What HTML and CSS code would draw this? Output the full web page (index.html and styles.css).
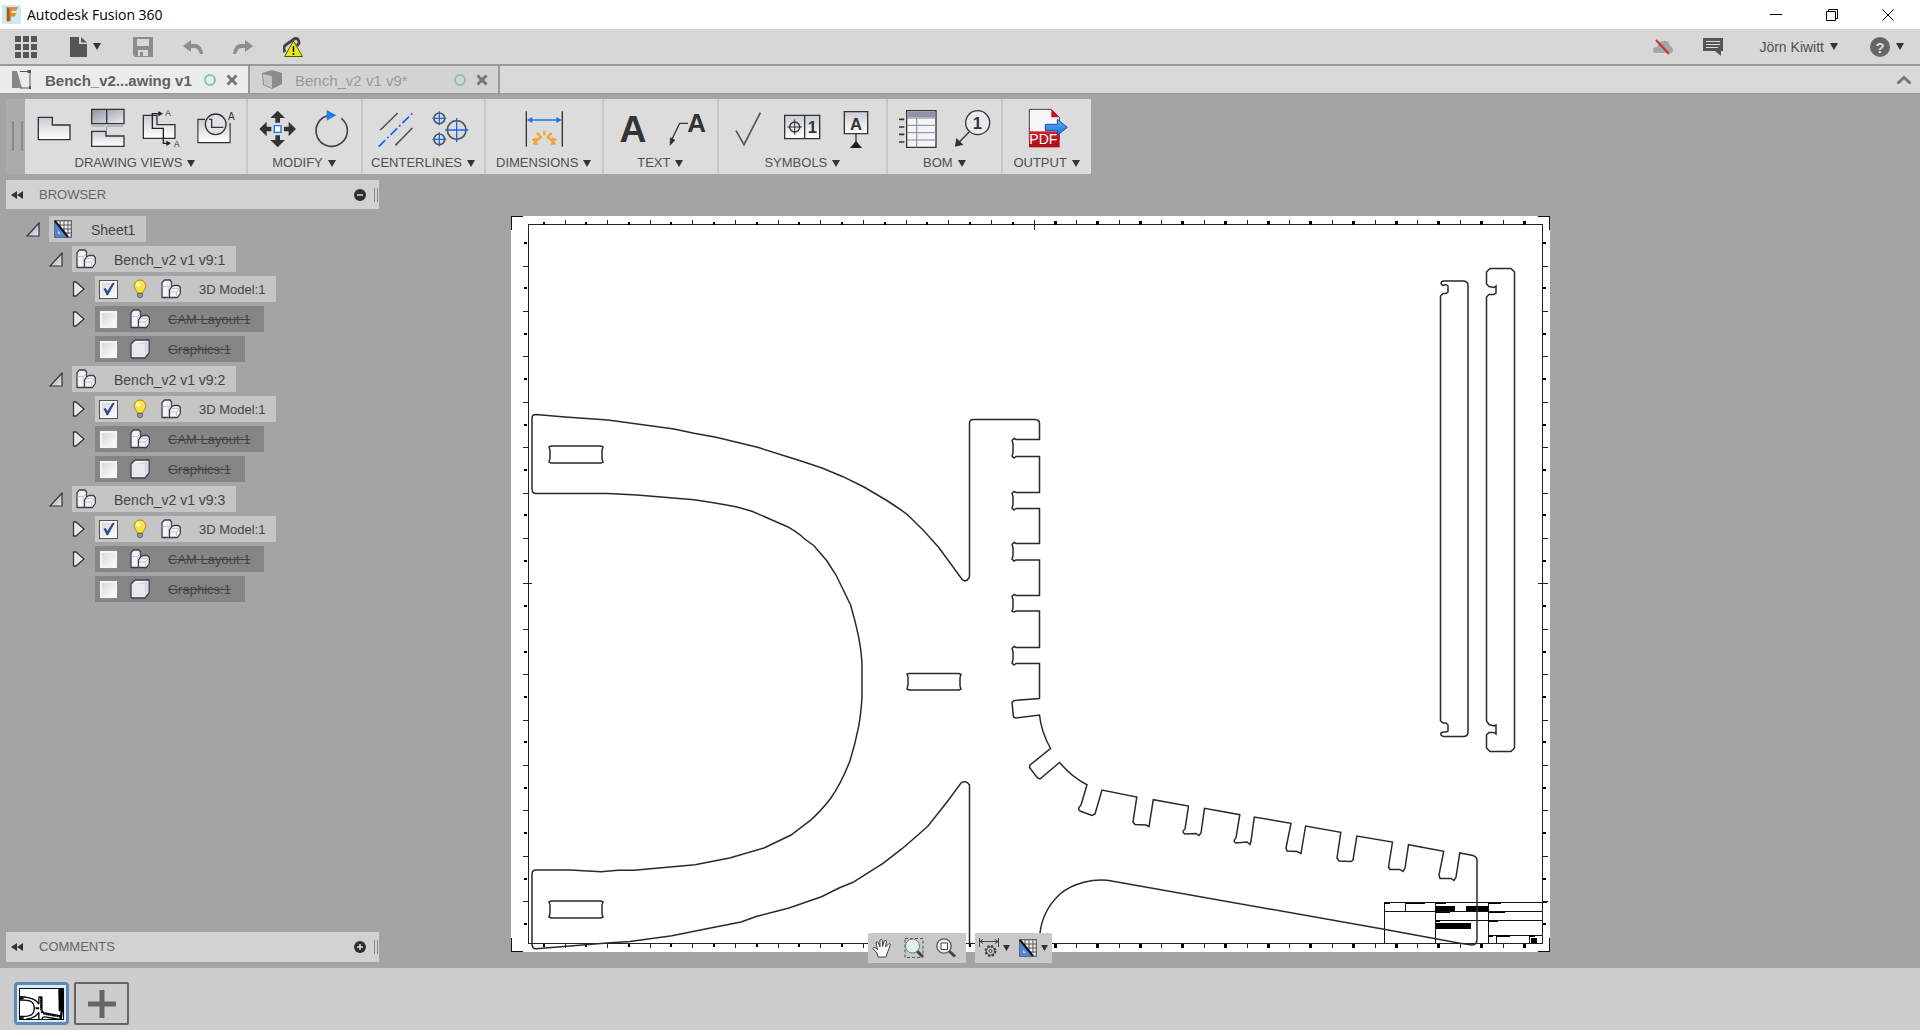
FILE: index.html
```html
<!DOCTYPE html>
<html lang="en">
<head>
<meta charset="utf-8">
<title>Autodesk Fusion 360</title>
<meta name="viewport" content="width=device-width, initial-scale=1">
<link rel="stylesheet" href="styles.css">
</head>
<body>
<svg class="defs" aria-hidden="true">
  <defs>
    <linearGradient id="metal" x1="0" y1="0" x2="0" y2="1"><stop offset="0" stop-color="#c9ccd6"/><stop offset="1" stop-color="#ffffff"/></linearGradient>
    <linearGradient id="metalDark" x1="0" y1="0" x2="1" y2="1"><stop offset="0" stop-color="#8f94a3"/><stop offset="1" stop-color="#eceef3"/></linearGradient>
    <linearGradient id="blueArrow" x1="0" y1="0" x2="0" y2="1"><stop offset="0" stop-color="#5cb2ff"/><stop offset="1" stop-color="#1a6fe0"/></linearGradient>
    <linearGradient id="redBox" x1="0" y1="0" x2="0" y2="1"><stop offset="0" stop-color="#d3202a"/><stop offset="1" stop-color="#a80d14"/></linearGradient>
    <symbol id="caret" viewBox="0 0 8 7"><path d="M0 0H8L4 7z" fill="#333"/></symbol>
    <symbol id="tri-open" viewBox="0 0 14 15"><path d="M13 1V14H1z" fill="url(#metalDark)" stroke="#333" stroke-width="1.2"/></symbol>
    <symbol id="tri-closed" viewBox="0 0 14 16"><path d="M1.500 1H4L12 8L4 15H1.500z" fill="#e8e8e8" stroke="#3a3a3a" stroke-width="1.300"/></symbol>
    <symbol id="bodies" viewBox="0 0 20 20"><path d="M1 3.500L3.500 1H9L10.500 3V8L13 6.500H17.500L19.300 8.500V14.500L16.500 18.500H1z" fill="#f2f3f6" stroke="#3c3f48" stroke-width="1.300" stroke-linejoin="round"/><path d="M1.700 7.500H7.500L10.300 5M7.800 7.500V18M8 12.500L11 9.500H18M8.500 13H15.500V18M15.500 13L18.500 9.500" fill="none" stroke="#c3c6ce" stroke-width="1"/><path d="M10.500 8L8.500 11V18" fill="none" stroke="#3c3f48" stroke-width="1.200"/></symbol>
    <symbol id="cube" viewBox="0 0 20 20"><path d="M1 5L5 1H19V14L15 19H2L1 18z" fill="#f1f2f5" stroke="#3c3f48" stroke-width="1.300" stroke-linejoin="round"/><path d="M2 5.500H14.500V18L18.300 13.500V2z" fill="#d9dbe2"/><path d="M2 6H14V18H2z" fill="#e9eaf0"/></symbol>
    <symbol id="bulb" viewBox="0 0 14 20"><path d="M7 1a6 6 0 0 0-3.500 10.800L4.500 14h5l1-2.200A6 6 0 0 0 7 1z" fill="#f8e23c" stroke="#b08a28" stroke-width="1"/><circle cx="5.500" cy="5.500" r="2.200" fill="#fffbd0"/><path d="M4.500 14.500h5v2.500l-1 1.500h-3l-1-1.500z" fill="#999" stroke="#555" stroke-width=".8"/></symbol>
    <symbol id="sheet-icon" viewBox="0 0 18 18"><rect x=".7" y=".7" width="16.600" height="16.600" fill="#f2f4f2" stroke="#555b66" stroke-width="1.200"/><path d="M6 1V14M10 1V14M14 1V14M4 5H17M4 9H17M4 13H17" stroke="#555" stroke-width="1"/><path d="M1 1V17H14z" fill="#4f86d8"/><path d="M1 1L14 17" stroke="#111" stroke-width="2"/><path d="M4 11v3h3z" fill="#bcd3f5"/></symbol>
    <symbol id="rewind" viewBox="0 0 12 8"><path d="M6 0V8L0 4zM12 0V8L6 4z" fill="#333"/></symbol>
    <symbol id="cross" viewBox="0 0 12 12"><path d="M1.500 1.500L10.500 10.500M10.500 1.500L1.500 10.500" stroke="#777" stroke-width="3"/></symbol>
    <g id="parts">
      <path d="M532 418Q532 414.500 536 414.500L565 417L608 420L630 423L674 429L694 433.300L716 437.300L757.500 447.300L787.500 456.700L801 461L822 468L843 476.700L864 487L886 500Q900 509 907 514.300Q924 530 938.600 547.300L962 579.300Q965.500 583 969 578L969.500 576V423Q970 419.500 973 419.500H1035Q1039.500 420 1039.500 423V439.500H1016l-2-1-2 2 1 3V453l-1 3 2 2 2-1.500H1039.500V492.500H1016l-2-1-2 2 1 3V505l-1 3 2 2 2-1.500H1039.500V543.500H1016l-2-1-2 2 1 3V556l-1 3 2 2 2-1H1039.500V595.500H1016l-2-1-2 2 1 3V608l-1 3 2 1 2-1H1039.500V647.500H1016l-2-1-2 2 1 3V660l-1 3 2 2 2-1.500H1039.500V698.500L1014 700.500L1012 702.500L1013.500 717L1015.500 718L1039.500 715Q1041 731 1050.500 748.500L1030 765L1029.500 767.500L1037.500 778L1040 779L1059.500 762.500Q1073 778 1087 784.700L1081 805Q1077 809 1080 811L1092 815.500L1095 814L1102 790L1136.800 797L1133 822L1135 824.500L1146 825L1149 826.500L1153.300 799.700L1188.500 806L1185 829Q1181 832 1185 834L1196 833.500L1199 835.500L1201 833L1204.500 808.300L1239.800 814.700L1236 838Q1232 841 1236 843L1247 842L1250 844.500L1251 841L1254.300 817L1291 823.300L1286 848L1287 851L1297 851.500L1301 853.500L1305.600 826L1340.800 832.300L1337 858L1339 861L1351 861.500L1353 860L1356.900 836L1392.500 842L1388.500 867L1390 869.500L1400 869.500L1403 871.500L1405 868L1408.500 844.700L1443.700 851.300L1439 875L1440 878.500L1451 878.500L1454 880.500L1456 877L1459.800 853L1473 855.500Q1477 857 1477 860V939Q1477 945 1472 945L1460 943.300L1384 929.300L1113 881.300C1094 877 1072 884 1060 894C1046 907 1039 922 1039.500 943.500"/>
      <path d="M532 418V489Q532 493.500 536 493.500H608L637 495L694 499.700Q723 504 737 507L752 511.300L787.500 526.700Q800 534 804 538.500L814 545.700L827 561L836 575L850.600 605Q855 620 858.600 636.700Q862 655 862 667.300V697.300Q861 714 858.600 726.700Q855 745 850 760.700Q841 784 830 799.300Q820 812 810 820.700L791 835L764 848L729.600 858L695 864.700L634 870.300H618L601 871.700L570 870H536Q532 870 532 874V945Q533 949 536 948.700L570 946L607 943L630 941.500L672 935.700L706.700 928.700L741 922L757 916.300L789 908L821.500 896.700L839 888L853 882.300L883 863.300L902 848.700Q917 836 928 826L947 802L961 783Q966 779.500 969.500 785V945"/>
      <path d="M551 446H601l2 1-1 3V459l1 3-2 1H551l-2-1 1-4V450l-1-3zM551 901H601l2 1-1 3V914l1 3-2 1H551l-2-1 1-4V905l-1-3zM909 673.500H959l2 1-1 3V686l1 3-2 1H909l-2-1 1-4V677l-1-3z"/>
      <path d="M1443 281H1464Q1468 282 1468 285V733Q1467 736.500 1464 736.500H1444Q1440 736 1441 733L1443 732H1446L1448 731V725L1446 723H1443L1440.500 721V296L1443 293.500H1446L1448 292V286L1446 284.500L1443 285.500Q1439 283 1443 281zM1490 268.500H1511L1514.500 272V748L1511 751.500H1490L1486.500 748V735L1489 732.500H1494L1496 734V725L1494 726L1489 724.500L1486.500 721V297L1489 294.500H1494L1496 293V286L1494 287.500L1489 286.500L1486.500 284V272z"/>
    </g>
  </defs>
</svg>

<div class="app">
  <header class="titlebar">
    <svg class="logo" viewBox="0 0 20 20"><rect width="20" height="20" fill="#cdeaf7"/><path d="M5 2H17L15 6H10V8.500H15L13.500 12H10L9 17H5z" fill="#e08a35"/><path d="M5 2L8 4V17H5z" fill="#a85c1c"/></svg>
    <h1>Autodesk Fusion 360</h1>
    <div class="window-controls">
      <button type="button" aria-label="Minimize"><svg viewBox="0 0 12 12"><path d="M0 5.500H12" stroke="#000"/></svg></button>
      <button type="button" aria-label="Restore"><svg viewBox="0 0 12 12"><path d="M.5 2.500H9.500V11.500H.5zM2.500 2.500V.5H11.500V9.500H9.500" fill="none" stroke="#000"/></svg></button>
      <button type="button" aria-label="Close"><svg viewBox="0 0 12 12"><path d="M.5 .5L11.500 11.500M11.500 .5L.5 11.500" stroke="#000"/></svg></button>
    </div>
  </header>

  <div class="quickbar">
    <div class="quick-left">
      <button type="button" aria-label="Data panel"><svg width="22" height="22" viewBox="0 0 22 22" fill="#555"><path d="M0 0h6v6H0zM8 0h6v6H8zM16 0h6v6h-6zM0 8h6v6H0zM8 8h6v6H8zM16 8h6v6h-6zM0 16h6v6H0zM8 16h6v6H8zM16 16h6v6h-6z"/></svg></button>
      <button type="button" aria-label="File" class="with-caret"><svg width="17" height="20" viewBox="0 0 17 20" fill="#555"><path d="M0 0H9V7H17V20H0z"/><path d="M11 0L17 5.500H11z"/></svg><svg class="caret"><use href="#caret"/></svg></button>
      <button type="button" aria-label="Save"><svg width="20" height="20" viewBox="0 0 20 20"><path d="M0 0H20V20H2L0 18z" fill="#8d8d8d"/><path d="M4 2H16V9H4z" fill="#d8d8d8"/><path d="M5 13H15V19H5z" fill="#d8d8d8"/><path d="M7 15h3v4H7z" fill="#8d8d8d"/></svg></button>
      <button type="button" aria-label="Undo"><svg width="20" height="14" viewBox="0 0 20 14"><path d="M0 6L8 0V4H13Q19 5 20 14H17Q15 8 12 8H8V12z" fill="#8d8d8d"/></svg></button>
      <button type="button" aria-label="Redo"><svg width="20" height="14" viewBox="0 0 20 14"><path d="M20 6L12 0V4H7Q1 5 0 14H3Q5 8 8 8H12V12z" fill="#8d8d8d"/></svg></button>
      <button type="button" aria-label="Update warning"><svg width="20" height="20" viewBox="0 0 20 20"><path d="M2 15Q-1 10 4 7L12 1.500Q16 1 16 6L14 9" fill="none" stroke="#444" stroke-width="3"/><path d="M10.500 4L19.500 19.500H1.500z" fill="#e9ec14" stroke="#555500"/><path d="M10.500 9V15M10.500 16V18" stroke="#111" stroke-width="1.500"/></svg></button>
    </div>
    <div class="quick-right">
      <button type="button" aria-label="Offline"><svg width="20" height="16" viewBox="0 0 20 16"><path d="M3 14Q0 14 0 11T4 8Q5 3 10 2Q16 1 17 7Q20 8 20 11T17 14z" fill="#a5a5a5"/><path d="M3 1L16 15" stroke="#c8303c" stroke-width="2"/></svg></button>
      <button type="button" aria-label="Comments"><svg width="20" height="18" viewBox="0 0 20 18"><path d="M0 0H20V13H18V18L12 13H0z" fill="#555"/><path d="M3 3.500H17M3 6.500H17M3 9.500H15" stroke="#ddd" stroke-width="1.200"/></svg></button>
      <button type="button" class="user with-caret">Jörn Kiwitt <svg class="caret"><use href="#caret"/></svg></button>
      <button type="button" aria-label="Help" class="with-caret"><svg width="20" height="20" viewBox="0 0 20 20"><circle cx="10" cy="10" r="10" fill="#666"/><text x="10" y="15.500" class="glyph-q">?</text></svg><svg class="caret"><use href="#caret"/></svg></button>
    </div>
  </div>

  <nav class="tabs" aria-label="Documents">
    <div class="tab active">
      <svg width="20" height="20" viewBox="0 0 20 20"><path d="M0 1H5L10 18H0z" fill="#888"/><path d="M8 1.500H18V18M16 0V3M8 18H19" fill="none" stroke="#555" stroke-width="1"/><path d="M16 0h3v3h-3zM17 16h2v3h-2z" fill="#555"/></svg>
      <a href="#drawing">Bench_v2...awing v1</a><i class="state"></i>
      <button type="button" aria-label="Close tab"><svg width="12" height="12"><use href="#cross"/></svg></button>
    </div>
    <div class="tab">
      <svg width="20" height="20" viewBox="0 0 20 20"><path d="M0 3L10 0L20 3V14L10 19L1 15z" fill="#8c8c8c"/><path d="M1 4L10 6V18L2 14.500z" fill="#c4c4c4"/></svg>
      <a href="#model">Bench_v2 v1 v9*</a><i class="state"></i>
      <button type="button" aria-label="Close tab"><svg width="12" height="12"><use href="#cross"/></svg></button>
    </div>
    <button type="button" class="collapse" aria-label="Collapse toolbar"><svg width="16" height="10" viewBox="0 0 16 10"><path d="M1.500 8.500L8 2.500L14.500 8.500" fill="none" stroke="#777" stroke-width="3"/></svg></button>
  </nav>

  <main class="workspace">
    <div class="ribbon">
      <span class="grip"></span>
      <section class="group">
        <div class="tools">
          <button type="button" aria-label="Base view"><svg viewBox="0 0 162 132"><path d="M34 34H76V57H129V101H34z" fill="url(#metal)" stroke="#333" stroke-width="4"/></svg></button>
          <button type="button" aria-label="Projected view"><svg viewBox="0 0 162 132"><path d="M32 10H129V53H32z" fill="url(#metalDark)" stroke="#333" stroke-width="4"/><path d="M77 10V53" stroke="#333" stroke-width="4"/><path d="M32 60H72M78 60H127M77 60V74" stroke="#777" stroke-width="2"/><path d="M32 76H75V90H129V121H32z" fill="url(#metal)" stroke="#333" stroke-width="4"/></svg></button>
          <button type="button" aria-label="Section view"><svg viewBox="0 0 162 132"><path d="M25 28H66V56H120V97H25z" fill="url(#metal)" stroke="#333" stroke-width="4"/><path d="M74 23H52V67H85V112H98" fill="none" stroke="#222" stroke-width="4"/><path d="M70 15L84 23L70 31zM94 104L108 112L94 120z" fill="#222"/><text x="91" y="31" class="glyph-s">A</text><text x="117" y="122" class="glyph-s">A</text></svg></button>
          <button type="button" aria-label="Detail view"><svg viewBox="0 0 162 132"><path d="M27 40H48M27 38V110H123V54H112" fill="none" stroke="#333" stroke-width="4"/><path d="M29 42H121V108H29z" fill="url(#metal)"/><circle cx="80" cy="55" r="31" fill="#e0e2e8" stroke="#333" stroke-width="4"/><path d="M60 40H68V64H103" fill="none" stroke="#333" stroke-width="4"/><text x="117" y="42" class="glyph-m">A</text></svg></button>
        </div>
        <button type="button" class="group-label">DRAWING VIEWS <svg class="caret"><use href="#caret"/></svg></button>
      </section>
      <section class="group">
        <div class="tools">
          <button type="button" aria-label="Move"><svg viewBox="0 0 162 132"><path d="M83 14L105 36H90V50H76V36H61zM83 124L105 102H90V88H76V102H61zM28 69L50 47V62H64V76H50V91zM138 69L116 47V62H102V76H116V91z" fill="#333"/><path d="M73 59H93V79H73z" fill="#fff" stroke="#1a73e8" stroke-width="4"/></svg></button>
          <button type="button" aria-label="Rotate"><svg viewBox="0 0 162 132"><path d="M112 37A47 47 0 1 1 74 28" fill="none" stroke="#444" stroke-width="5"/><path d="M68 12L97 28L68 44z" fill="#1a7ef0"/></svg></button>
        </div>
        <button type="button" class="group-label">MODIFY <svg class="caret"><use href="#caret"/></svg></button>
      </section>
      <section class="group">
        <div class="tools">
          <button type="button" aria-label="Centerline"><svg viewBox="0 0 162 132" stroke-width="5"><path d="M34 72L86 21M79 118L130 66" stroke="#555"/><path d="M29 122L131 21" stroke="#1a66e8" stroke-dasharray="28 8 6 8"/></svg></button>
          <button type="button" aria-label="Center mark pattern"><svg viewBox="0 0 162 132" fill="none" stroke-width="5"><g stroke="#555"><circle cx="49" cy="37" r="16"/><circle cx="49" cy="100" r="16"/><circle cx="101" cy="72" r="28"/></g><path d="M28 37H70M49 16V58M28 100H70M49 79V121M66 72H136M101 36V108" stroke="#1a66e8" stroke-width="4"/></svg></button>
        </div>
        <button type="button" class="group-label">CENTERLINES <svg class="caret"><use href="#caret"/></svg></button>
      </section>
      <section class="group single">
        <div class="tools">
          <button type="button" aria-label="Dimension"><svg viewBox="0 0 162 132"><path d="M28 16V122M136 16V122" stroke="#333" stroke-width="4"/><path d="M34 42H130" stroke="#1a73e8" stroke-width="4"/><path d="M30 42L46 33V51zM134 42L118 33V51z" fill="#1a73e8"/><path d="M82 74V88M60 80L72 93L64 99L52 112M104 80L92 93L100 99L112 112M46 102L60 98M118 102L104 98M48 113H62M116 113H102" fill="none" stroke="#f0a52c" stroke-width="7"/></svg></button>
        </div>
        <button type="button" class="group-label">DIMENSIONS <svg class="caret"><use href="#caret"/></svg></button>
      </section>
      <section class="group">
        <div class="tools">
          <button type="button" aria-label="Text"><svg viewBox="0 0 162 132"><text x="81" y="109" class="glyph-xl">A</text></svg></button>
          <button type="button" aria-label="Leader"><svg viewBox="0 0 162 132"><path d="M36 100L59 52H84" fill="none" stroke="#333" stroke-width="4"/><path d="M29 120L30 94L46 102z" fill="#333"/><text x="110" y="78" class="glyph-l">A</text></svg></button>
        </div>
        <button type="button" class="group-label">TEXT <svg class="caret"><use href="#caret"/></svg></button>
      </section>
      <section class="group">
        <div class="tools">
          <button type="button" aria-label="Surface texture"><svg viewBox="0 0 162 132"><path d="M45 74L69 116L118 20" fill="none" stroke="#555" stroke-width="5"/></svg></button>
          <button type="button" aria-label="Feature control frame"><svg viewBox="0 0 162 132"><path d="M29 28H134V98H29zM89 28V98" fill="url(#metal)" stroke="#333" stroke-width="4"/><path d="M37 63H81M59 40V86" stroke="#333" stroke-width="3"/><circle cx="59" cy="63" r="15" fill="none" stroke="#333" stroke-width="4"/><text x="112" y="82" class="glyph-n">1</text></svg></button>
          <button type="button" aria-label="Datum identifier"><svg viewBox="0 0 162 132"><path d="M46 17H116V83H46z" fill="url(#metal)" stroke="#333" stroke-width="4"/><path d="M81 83V110" stroke="#333" stroke-width="4"/><path d="M81 104L99 126H63z" fill="#222"/><text x="81" y="71" class="glyph-n">A</text></svg></button>
        </div>
        <button type="button" class="group-label">SYMBOLS <svg class="caret"><use href="#caret"/></svg></button>
      </section>
      <section class="group">
        <div class="tools">
          <button type="button" aria-label="Table"><svg viewBox="0 0 162 132"><path d="M50 14H138V124H50z" fill="#f4f5f8" stroke="#333" stroke-width="4"/><path d="M52 16H136V34H52z" fill="#8e95a8"/><path d="M50 36H138M50 58H138M50 80H138M50 102H138M80 36V124" stroke="#888" stroke-width="3"/><path d="M27 40H43M27 63H43M27 85H43M27 108H43" stroke="#333" stroke-width="5"/></svg></button>
          <button type="button" aria-label="Balloon"><svg viewBox="0 0 162 132"><path d="M76 77L46 108" stroke="#333" stroke-width="4"/><path d="M33 122L37 96L58 116z" fill="#333"/><circle cx="101" cy="50" r="36" fill="#e8eaf0" stroke="#333" stroke-width="4"/><text x="100" y="68" class="glyph-n">1</text></svg></button>
        </div>
        <button type="button" class="group-label">BOM <svg class="caret"><use href="#caret"/></svg></button>
      </section>
      <section class="group single">
        <div class="tools">
          <button type="button" aria-label="Output PDF"><svg viewBox="0 0 162 132"><path d="M28 10H94L118 34V100H28z" fill="#f6f6f8" stroke="#444" stroke-width="3"/><path d="M94 10L118 34H94z" fill="#c8141e"/><path d="M27 76H119V124H27z" fill="url(#redBox)"/><text x="70" y="115" class="glyph-pdf">PDF</text><path d="M76 55H112V40L142 64L112 88V74H76z" fill="url(#blueArrow)" stroke="#174f9c" stroke-width="3"/></svg></button>
        </div>
        <button type="button" class="group-label">OUTPUT <svg class="caret"><use href="#caret"/></svg></button>
      </section>
    </div>

    <div class="stage">
      <aside class="side">
        <div class="panel-head"><svg width="12" height="8"><use href="#rewind"/></svg><h2>BROWSER</h2><button type="button" aria-label="Collapse browser"><svg width="12" height="12" viewBox="0 0 12 12"><circle cx="6" cy="6" r="6" fill="#2f2f2f"/><path d="M3 6H9" stroke="#ddd" stroke-width="1.500"/></svg></button><span class="bars"></span></div>
        <ul class="tree">
          <li>
            <div class="row branch"><button type="button" class="toggle" aria-label="Collapse Sheet1"><svg width="14" height="15"><use href="#tri-open"/></svg></button><div class="chip"><svg class="page-icon" width="18" height="18"><use href="#sheet-icon"/></svg><span>Sheet1</span></div></div>
            <ul>
              <li>
                <div class="row branch"><button type="button" class="toggle" aria-label="Collapse view 1"><svg width="14" height="15"><use href="#tri-open"/></svg></button><div class="chip"><svg width="20" height="20"><use href="#bodies"/></svg><span>Bench_v2 v1 v9:1</span></div></div>
                <ul>
                  <li class="row"><button type="button" class="toggle" aria-label="Expand"><svg width="14" height="16"><use href="#tri-closed"/></svg></button><div class="chip"><input type="checkbox" id="m1" checked><svg class="bulb" width="14" height="20"><use href="#bulb"/></svg><svg width="20" height="20"><use href="#bodies"/></svg><label for="m1">3D Model:1</label></div></li>
                  <li class="row"><button type="button" class="toggle" aria-label="Expand"><svg width="14" height="16"><use href="#tri-closed"/></svg></button><div class="chip off"><input type="checkbox" id="c1"><svg width="20" height="20"><use href="#bodies"/></svg><label for="c1">CAM Layout:1</label></div></li>
                  <li class="row"><span class="toggle"></span><div class="chip off"><input type="checkbox" id="g1"><svg width="20" height="20"><use href="#cube"/></svg><label for="g1">Graphics:1</label></div></li>
                </ul>
              </li>
              <li>
                <div class="row branch"><button type="button" class="toggle" aria-label="Collapse view 2"><svg width="14" height="15"><use href="#tri-open"/></svg></button><div class="chip"><svg width="20" height="20"><use href="#bodies"/></svg><span>Bench_v2 v1 v9:2</span></div></div>
                <ul>
                  <li class="row"><button type="button" class="toggle" aria-label="Expand"><svg width="14" height="16"><use href="#tri-closed"/></svg></button><div class="chip"><input type="checkbox" id="m2" checked><svg class="bulb" width="14" height="20"><use href="#bulb"/></svg><svg width="20" height="20"><use href="#bodies"/></svg><label for="m2">3D Model:1</label></div></li>
                  <li class="row"><button type="button" class="toggle" aria-label="Expand"><svg width="14" height="16"><use href="#tri-closed"/></svg></button><div class="chip off"><input type="checkbox" id="c2"><svg width="20" height="20"><use href="#bodies"/></svg><label for="c2">CAM Layout:1</label></div></li>
                  <li class="row"><span class="toggle"></span><div class="chip off"><input type="checkbox" id="g2"><svg width="20" height="20"><use href="#cube"/></svg><label for="g2">Graphics:1</label></div></li>
                </ul>
              </li>
              <li>
                <div class="row branch"><button type="button" class="toggle" aria-label="Collapse view 3"><svg width="14" height="15"><use href="#tri-open"/></svg></button><div class="chip"><svg width="20" height="20"><use href="#bodies"/></svg><span>Bench_v2 v1 v9:3</span></div></div>
                <ul>
                  <li class="row"><button type="button" class="toggle" aria-label="Expand"><svg width="14" height="16"><use href="#tri-closed"/></svg></button><div class="chip"><input type="checkbox" id="m3" checked><svg class="bulb" width="14" height="20"><use href="#bulb"/></svg><svg width="20" height="20"><use href="#bodies"/></svg><label for="m3">3D Model:1</label></div></li>
                  <li class="row"><button type="button" class="toggle" aria-label="Expand"><svg width="14" height="16"><use href="#tri-closed"/></svg></button><div class="chip off"><input type="checkbox" id="c3"><svg width="20" height="20"><use href="#bodies"/></svg><label for="c3">CAM Layout:1</label></div></li>
                  <li class="row"><span class="toggle"></span><div class="chip off"><input type="checkbox" id="g3"><svg width="20" height="20"><use href="#cube"/></svg><label for="g3">Graphics:1</label></div></li>
                </ul>
              </li>
            </ul>
          </li>
        </ul>
        <div class="panel-head comments"><svg width="12" height="8"><use href="#rewind"/></svg><h2>COMMENTS</h2><button type="button" aria-label="Expand comments"><svg width="12" height="12" viewBox="0 0 12 12"><circle cx="6" cy="6" r="6" fill="#2f2f2f"/><path d="M3 6H9M6 3V9" stroke="#ddd" stroke-width="1.500"/></svg></button><span class="bars"></span></div>
      </aside>

      <div class="canvas">
        <svg class="sheet" viewBox="511 216 1039 736" role="img" aria-label="Bench drawing sheet">
          <rect x="511" y="216" width="1039" height="736" fill="#fff"/>
          <g fill="none" stroke="#222" shape-rendering="crispEdges">
            <path d="M528.500 224.500H1542.500V943.500H528.500z"/>
            <path d="M511.500 230V216.500H523M1538 216.500H1549.500V230M511.500 938V951.500H523M1538 951.500H1549.500V938" stroke="#111"/>
            <path d="M1034.500 220V230M523 583.500H532M1538 583.500H1547"/>
            <path d="M564.500 222H1504M564.500 946H1504" stroke-width="4" stroke-dasharray="1 41.640"/>
            <path d="M542.500 223H1526M542.500 945.500H1526" stroke="#000" stroke-width="3" stroke-dasharray="2 40.640"/>
            <path d="M1053.500 223H1526M1053.500 945.500H1526" stroke="#000" stroke-width="4" stroke-dasharray="3 39.640"/>
            <path d="M525.500 265.500V902M1545 265.500V902" stroke-width="5" stroke-dasharray="1 44.400"/>
            <path d="M525.500 242V926M1544 242V926" stroke="#000" stroke-width="3" stroke-dasharray="2 43.400"/>
            <path d="M1384.500 943V902.500H1547M1384 911.500H1542M1436 920.500H1542M1488 935.500H1542M1435.500 902V943M1488.500 902V943M1405.500 902V911M1496.500 935V943M1529.500 935V943" stroke="#111"/>
          </g>
          <path fill="#000" d="M1436 906h19v5h-19zM1466 906h22v5h-22zM1436 923h35v6h-35zM1385 903h5v1h-5zM1406 903h19v1h-19zM1436 903h10v1h-10zM1488 903h13v1h-13zM1436 912h14v1h-14zM1488 912h17v1h-17zM1436 920h4v2h-4zM1488 921h10v1h-10zM1488 935h5v2h-5zM1497 935h13v2h-13zM1529 935h6v2h-6zM1531 938h6v5h-6z"/>
          <use href="#parts" fill="none" stroke="#2a2a2a" stroke-width="1.500"/>
        </svg>
      </div>
    </div>

    <div class="navbar" role="toolbar" aria-label="Navigation">
      <div class="nav-group">
        <button type="button" aria-label="Pan"><svg width="20" height="20" viewBox="0 0 20 20"><path d="M6 19L5 15L0.800 10.500Q1.500 8.500 4 10L5.500 11.500L4 4.500Q5.500 2.500 6.500 5L8 9L8 2Q9.500 0 10.500 2.500V8.500L12.500 2.500Q14.500 1.500 14.500 4L13.500 9L17 5.500Q19 5.500 18 8L16 13L14 19z" fill="#fff" stroke="#444" stroke-width="1"/></svg></button>
        <button type="button" aria-label="Zoom window"><svg width="20" height="20" viewBox="0 0 20 20"><path d="M1 .5H19V19.500H1z" fill="none" stroke="#555" stroke-dasharray="3 2"/><path d="M12 12L18.500 18.500" stroke="#444" stroke-width="3"/><circle cx="8.500" cy="8" r="7" fill="#dff0ee" stroke="#777"/></svg></button>
        <button type="button" aria-label="Fit"><svg width="20" height="20" viewBox="0 0 20 20"><path d="M12 12L19 18.500" stroke="#444" stroke-width="3"/><circle cx="8" cy="8" r="7.200" fill="#e8edef" stroke="#555" stroke-width="1.300"/><path d="M5 5H11.500V11.500H5z" fill="#fff" stroke="#444"/></svg></button>
      </div>
      <div class="nav-group">
        <button type="button" aria-label="Drawing settings" class="with-caret"><svg width="20" height="20" viewBox="0 0 20 20" fill="none" stroke="#444"><path d="M.5 0V9M19.500 0V9M1 3.500H19M4 1.500L1 3.500L4 5.500M16 1.500L19 3.500L16 5.500"/><circle cx="11.500" cy="13" r="4.800" stroke-width="2.400" stroke-dasharray="2.200 1.570"/><circle cx="11.500" cy="13" r="4.200"/><circle cx="11.500" cy="13" r="1.500"/></svg><svg class="caret small"><use href="#caret"/></svg></button>
        <button type="button" aria-label="Sheet settings" class="with-caret"><svg width="18" height="18"><use href="#sheet-icon"/></svg><svg class="caret small"><use href="#caret"/></svg></button>
      </div>
    </div>
  </main>

  <footer class="sheets">
    <button type="button" class="thumb selected" aria-label="Sheet 1"><svg viewBox="511 216 1039 736" preserveAspectRatio="none"><rect x="511" y="216" width="1039" height="736" fill="#fff" stroke="#000" stroke-width="44"/><path d="M1420 230H1540V420L1520 460L1540 640L1500 940H1440L1480 700L1430 500z" fill="#000"/><use href="#parts" fill="none" stroke="#000" stroke-width="30"/></svg></button>
    <button type="button" class="thumb" aria-label="Add sheet"><svg viewBox="0 0 28 28"><path d="M0 14H28M14 0V28" stroke="#666" stroke-width="5"/></svg></button>
  </footer>
</div>
</body>
</html>
```
FILE: styles.css
```css
* { box-sizing: border-box; }

body {
  margin: 0;
  background: #a4a4a4;
  color: #505050;
  font: 13px/20px "Liberation Sans", Arial, sans-serif;
}

button {
  display: flex;
  align-items: center;
  justify-content: center;
  padding: 0;
  border: 0;
  background: none;
  color: inherit;
  font: inherit;
}

svg { display: block; flex: none; }
h1, h2 { margin: 0; font-weight: normal; }
ul { margin: 0; padding: 0; list-style: none; }
.defs { position: absolute; width: 0; height: 0; }
.caret { width: 8px; height: 7px; }
.caret.small { width: 7px; height: 6px; }

.app { display: flex; flex-direction: column; min-height: 100vh; }

/* Window title */
.titlebar {
  display: flex;
  align-items: center;
  gap: 6px;
  height: 29px;
  padding: 0 4px 0 2px;
  background: #fff;
  color: #000;
}
.titlebar h1 { flex: 1; font: 14px/20px "Open Sans", "Noto Sans", sans-serif; }
.logo { width: 19px; height: 19px; }
.window-controls { display: flex; }
.window-controls button { width: 56px; height: 28px; }
.window-controls svg { width: 12px; height: 12px; }

/* Quick access */
.quickbar {
  display: flex;
  justify-content: space-between;
  height: 37px;
  padding: 0 16px 0 15px;
  background: #d7d7d7;
  border-bottom: 2px solid #9a9a9a;
}
.quick-left, .quick-right { display: flex; align-items: center; gap: 30px; }
.quick-left button:nth-child(2) { margin: 0 2px 0 3px; }
.quick-right button:nth-child(3) { margin: 0 2px 0 6px; }
.with-caret { gap: 6px; }
.user { font-size: 14px; }

/* Document tabs */
.tabs {
  display: flex;
  height: 28px;
  background: #d9d9d9;
  border-bottom: 1px solid #999;
}
.tab {
  display: flex;
  align-items: center;
  width: 250px;
  padding: 0 10px 0 12px;
  border-right: 2px solid #999;
  background: #d3d3d3;
  color: #999;
  font-size: 15px;
}
.tab.active { background: #ececec; color: #606060; font-weight: bold; }
.tab a { flex: 1; margin-left: 13px; padding-top: 3px; color: inherit; text-decoration: none; }
.state { width: 12px; height: 12px; margin-right: 10px; border: 2px solid #7fc8ab; border-radius: 50%; }
.collapse { margin: 0 8px 0 auto; }

/* Ribbon */
.workspace { position: relative; display: flex; flex: 1; flex-direction: column; background: #a4a4a4; }
.ribbon { display: flex; margin: 5px 0 6px 6px; }
.grip { width: 19px; padding: 22px 6px; background: #ababab; }
.grip::before { content: ""; display: block; width: 7px; height: 30px; border: solid #8a8a8a; border-width: 0 2px; }
.group {
  padding: 7px 3px 0 2px;
  height: 75px;
  background: #dcdcdc;
  border-right: 2px solid #c8c8c8;
}
.group:last-child { border-right: 0; }
.tools { display: flex; justify-content: center; }
.tools svg { width: 54px; height: 44px; }
.group-label { gap: 5px; width: 100%; height: 24px; padding: 2px 6px 0; white-space: nowrap; }
.single .group-label { padding: 2px 8px 0; }

svg text { fill: #333; font-family: "Liberation Sans", Arial, sans-serif; font-weight: bold; text-anchor: middle; }
.tools .glyph-s { font-size: 25px; font-weight: normal; text-anchor: start; }
.tools .glyph-m { font-size: 30px; font-weight: normal; text-anchor: start; }
.glyph-n { font-size: 50px; }
.glyph-l { font-size: 78px; }
.glyph-xl { font-size: 112px; }
svg .glyph-pdf { fill: #fff; font-size: 42px; font-weight: normal; }
svg .glyph-q { fill: #ddd; font-size: 15px; }

/* Side panels */
.stage { display: flex; flex: 1; align-items: stretch; }
.side { display: flex; flex: 0 0 379px; flex-direction: column; padding: 0 0 6px 6px; }
.panel-head {
  display: flex;
  align-items: center;
  height: 29px;
  padding: 0 1px 0 5px;
  background: #d2d2d2;
  color: #666;
}
.panel-head h2 { flex: 1; margin-left: 16px; font-size: 13px; }
.bars { width: 4px; height: 14px; margin-left: 8px; border: solid #888; border-width: 0 1px; }
.comments { margin-top: auto; height: 30px; }
.tree { padding: 5px 0 0 20px; color: #444; }
.tree ul { padding-left: 23px; }
.row { display: flex; align-items: center; height: 30px; }
.branch { font-size: 14px; }
.toggle { width: 23px; justify-content: flex-start; }
.chip {
  display: flex;
  align-items: center;
  height: 26px;
  padding: 0 11px 0 4px;
  background: #c5c5c5;
  white-space: nowrap;
}
.chip span, .chip label { margin-left: 18px; padding-top: 1px; }
.chip .page-icon { margin: 0 1px; }
.chip.off { padding-right: 14px; background: #858585; text-decoration: line-through; }
.chip input {
  appearance: none;
  position: relative;
  width: 19px;
  height: 19px;
  margin: 0 12px 0 0;
  border: 1px solid #8a8a8a;
  background: linear-gradient(135deg, #d5d5d5, #fff);
  box-shadow: inset 0 0 0 2px #f4f4f4;
}
.chip input:checked { border-color: #555; }
.chip input:checked::after {
  content: "";
  position: absolute;
  inset: 2px;
  background: #2d4c96;
  clip-path: polygon(12% 48%, 28% 42%, 42% 66%, 80% 4%, 98% 4%, 46% 98%, 36% 98%);
}
.chip .bulb { margin: 0 14px 0 3px; }

/* Drawing */
.canvas { flex: 1; min-width: 0; padding: 36px 370px 0 132px; }
.sheet { width: 100%; height: auto; }

.navbar {
  position: absolute;
  bottom: 5px;
  left: 50%;
  display: flex;
  gap: 9px;
  transform: translateX(-50%);
}
.nav-group { display: flex; gap: 12px; height: 30px; padding: 0 10px 0 4px; background: #c9c9c9; }
.nav-group:last-child { gap: 9px; padding: 0 4px; }
.nav-group .with-caret { gap: 4px; }

/* Sheet strip */
.sheets { display: flex; gap: 5px; height: 62px; padding: 14px; background: #cdcdcd; }
.thumb { width: 55px; height: 43px; border: 2px solid #666; border-radius: 2px; }
.thumb svg { width: 28px; height: 28px; }
.thumb.selected { border: 3px solid #5a8ab5; border-radius: 4px; background: #dfe9f2; }
.thumb.selected svg { width: 45px; height: 32px; }
```
